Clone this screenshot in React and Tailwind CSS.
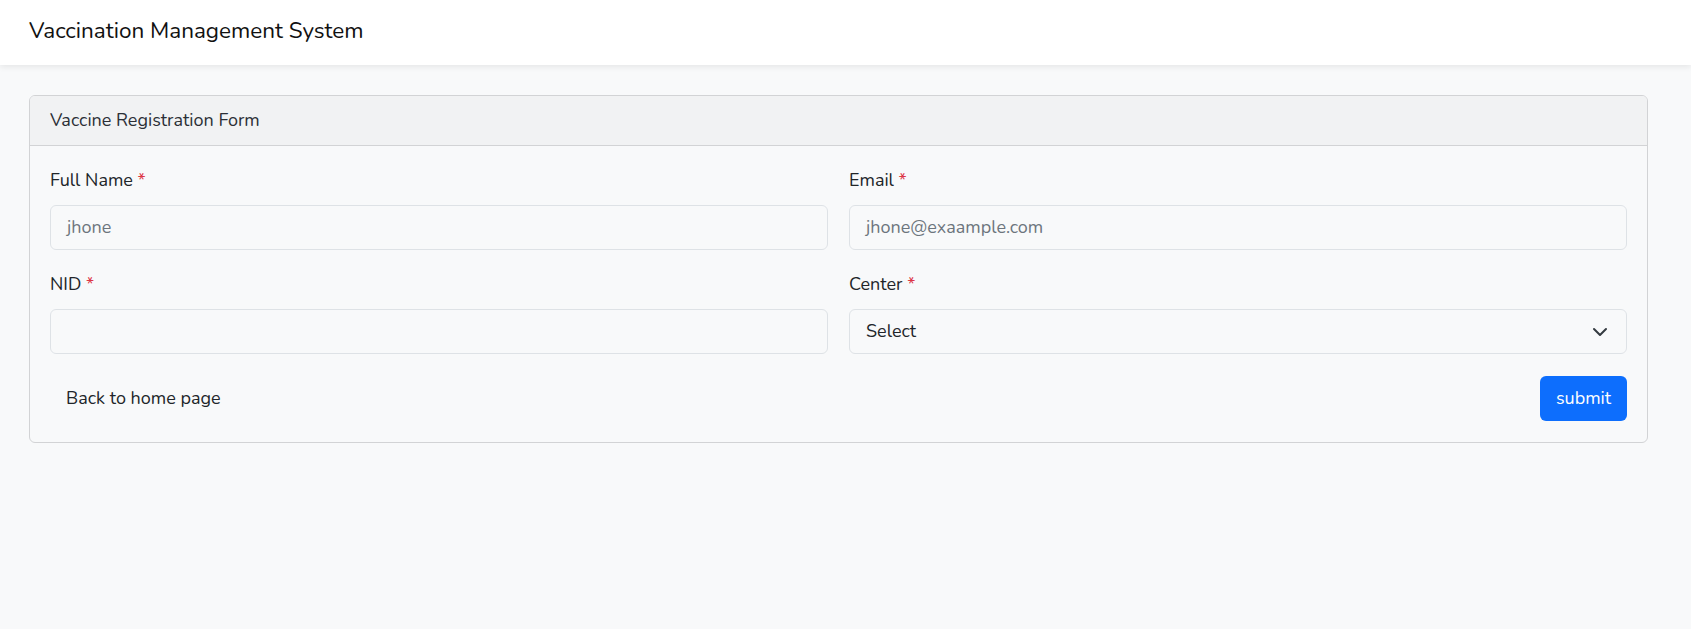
export default function App() {
  const font = { fontFamily: 'Nunito, "Open Sans", Lato, sans-serif' };
  return (
    <div className="min-h-[629px] bg-[#f8f9fa] text-[#212529]" style={font}>
      <header className="h-[65px] bg-white flex items-center px-[29px] pb-[3px] shadow-[0_2px_6px_rgba(0,0,0,0.08)] relative">
        <span className="text-[22.5px] text-[#111]">Vaccination Management System</span>
      </header>
      <main className="pt-[30px] pl-[29px] pr-[43px]">
        <div className="border border-[#d2d3d5] rounded-[6px] overflow-hidden">
          <div className="h-[50px] bg-[#f1f2f3] border-b border-[#d2d3d5] flex items-center px-[20px] text-[18px] text-[#2b2f36]">
            Vaccine Registration Form
          </div>
          <div className="px-[20px] pt-[21px] pb-[21px]">
            <div className="grid grid-cols-2 gap-x-[21px] gap-y-[21px]">
              {[
                ["Full Name", "jhone"],
                ["Email", "jhone@exaample.com"],
                ["NID", ""],
              ].map(([l, p]) => (
                <div key={l}>
                  <label className="block text-[18px] leading-[27px] mb-[11px]">
                    {l} <span className="text-[#dc3545]">*</span>
                  </label>
                  <div className="h-[45px] border border-[#dee2e6] rounded-[6px] bg-[#f8f9fa] flex items-center px-[16px] text-[18px] text-[#6c757d]">
                    {p}
                  </div>
                </div>
              ))}
              <div>
                <label className="block text-[18px] leading-[27px] mb-[11px]">
                  Center <span className="text-[#dc3545]">*</span>
                </label>
                <div className="h-[45px] border border-[#dee2e6] rounded-[6px] bg-[#f8f9fa] flex items-center justify-between px-[16px] text-[18px] text-[#212529]">
                  <span>Select</span>
                  <svg width="16" height="16" viewBox="0 0 16 16" className="mr-[2px]">
                    <path d="M2 5l6 6 6-6" fill="none" stroke="#343a40" strokeWidth="2" strokeLinecap="round" strokeLinejoin="round" />
                  </svg>
                </div>
              </div>
            </div>
            <div className="flex items-center justify-between mt-[22px]">
              <span className="px-[16px] text-[18px] text-[#212529]">Back to home page</span>
              <button className="h-[45px] w-[87px] rounded-[6px] bg-[#0d6efd] text-white text-[18px]">submit</button>
            </div>
          </div>
        </div>
      </main>
    </div>
  );
}
